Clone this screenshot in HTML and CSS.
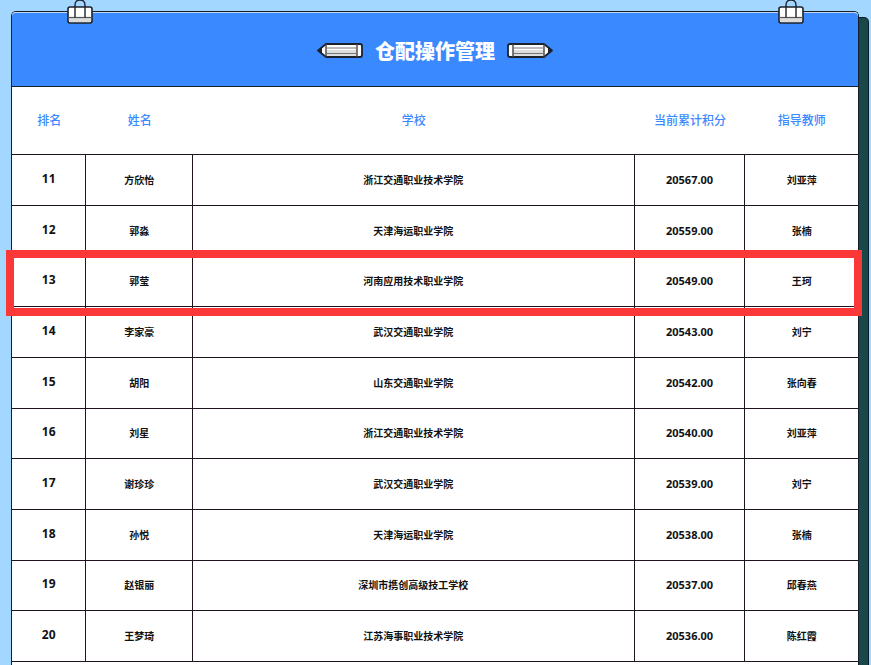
FILE: index.html
```html
<!DOCTYPE html>
<html lang="zh-CN">
<head>
    <meta charset="UTF-8">
    <meta name="viewport" content="width=device-width, initial-scale=1.0">
    <title>仓配操作管理</title>
    <link rel="stylesheet" href="styles.css">
</head>
<body>
    <div class="board">
        <!-- 夹子 -->
        <svg class="clip clip-left" viewBox="0 0 26 24" aria-hidden="true">
            <rect x="1" y="7" width="24" height="16" rx="2" fill="#fff" stroke="#1b222b" stroke-width="1.6"/>
            <path d="M2 18h22v4H2z" fill="#dcdcdc"/>
            <path d="M1 17.500h24" stroke="#555" stroke-width="1.200"/>
            <path d="M8 17.500V5q0-5 5-5t5 5v12.500" fill="none" stroke="#1b222b" stroke-width="1.400"/>
        </svg>
        <svg class="clip clip-right" viewBox="0 0 26 24" aria-hidden="true">
            <rect x="1" y="7" width="24" height="16" rx="2" fill="#fff" stroke="#1b222b" stroke-width="1.6"/>
            <path d="M2 18h22v4H2z" fill="#dcdcdc"/>
            <path d="M1 17.500h24" stroke="#555" stroke-width="1.200"/>
            <path d="M8 17.500V5q0-5 5-5t5 5v12.500" fill="none" stroke="#1b222b" stroke-width="1.400"/>
        </svg>

        <div class="board-header">
            <svg class="pencil" viewBox="0 0 46 15" aria-hidden="true">
                <path d="M1 7.500L9 1h34q2 0 2 2v9q0 2-2 2H9z" fill="#fff" stroke="#1b222b" stroke-width="1.800" stroke-linejoin="round"/>
                <path d="M9 7h31v6H9z" fill="#dedede"/>
                <path d="M9 1v13M40 1v13" stroke="#444" stroke-width="1.400"/>
                <path d="M9 5h31M9 10.500h31" stroke="#777"/>
                <path d="M1 7.500l4-3v6z" fill="#1b222b"/>
            </svg>
            <h1 class="title">仓配操作管理</h1>
            <svg class="pencil" viewBox="0 0 46 15" aria-hidden="true">
                <path d="M45 7.500L37 1H3Q1 1 1 3v9q0 2 2 2h34z" fill="#fff" stroke="#1b222b" stroke-width="1.800" stroke-linejoin="round"/>
                <path d="M6 7h31v6H6z" fill="#dedede"/>
                <path d="M37 1v13M6 1v13" stroke="#444" stroke-width="1.400"/>
                <path d="M6 5h31M6 10.500h31" stroke="#777"/>
                <path d="M45 7.500l-4-3v6z" fill="#1b222b"/>
            </svg>
        </div>

        <table class="rank-table">
            <colgroup>
                <col class="col-rank">
                <col class="col-name">
                <col class="col-school">
                <col class="col-score">
                <col class="col-teacher">
            </colgroup>
            <thead>
                <tr><th>排名</th><th>姓名</th><th>学校</th><th>当前累计积分</th><th>指导教师</th></tr>
            </thead>
            <tbody>
                <tr><td class="rank">11</td><td>方欣怡</td><td>浙江交通职业技术学院</td><td class="score">20567.00</td><td>刘亚萍</td></tr>
                <tr><td class="rank">12</td><td>郭淼</td><td>天津海运职业学院</td><td class="score">20559.00</td><td>张楠</td></tr>
                <tr class="active"><td class="rank">13</td><td>郭莹</td><td>河南应用技术职业学院</td><td class="score">20549.00</td><td>王珂</td></tr>
                <tr><td class="rank">14</td><td>李家豪</td><td>武汉交通职业学院</td><td class="score">20543.00</td><td>刘宁</td></tr>
                <tr><td class="rank">15</td><td>胡阳</td><td>山东交通职业学院</td><td class="score">20542.00</td><td>张向春</td></tr>
                <tr><td class="rank">16</td><td>刘星</td><td>浙江交通职业技术学院</td><td class="score">20540.00</td><td>刘亚萍</td></tr>
                <tr><td class="rank">17</td><td>谢珍珍</td><td>武汉交通职业学院</td><td class="score">20539.00</td><td>刘宁</td></tr>
                <tr><td class="rank">18</td><td>孙悦</td><td>天津海运职业学院</td><td class="score">20538.00</td><td>张楠</td></tr>
                <tr><td class="rank">19</td><td>赵银丽</td><td>深圳市携创高级技工学校</td><td class="score">20537.00</td><td>邱春燕</td></tr>
                <tr><td class="rank">20</td><td>王梦琦</td><td>江苏海事职业技术学院</td><td class="score">20536.00</td><td>陈红霞</td></tr>
            </tbody>
        </table>
    </div>
</body>
</html>
```
FILE: styles.css
```css
* {
    box-sizing: border-box;
}

body {
    margin: 0;
    min-height: 100vh;
    padding: 11px 12px 0 11px;
    display: flex;
    background-color: #a3d7ff;
    font-family: "Noto Sans", "Noto Sans CJK SC", sans-serif;
}

.board {
    position: relative;
    flex: 1;
    background-color: #fff;
    border: 1px solid #14202e;
    border-bottom: none;
    border-radius: 5px 5px 0 0;
    box-shadow: 10px 6px 0 -1px #18484a, 10px 6px 0 0 #0c1c26;
}

/* 顶部夹子 */
.clip {
    position: absolute;
    top: -12px;
    width: 26px;
    height: 24px;
}

.clip-left {
    left: 55px;
}

.clip-right {
    right: 54px;
}

.board-header {
    display: flex;
    align-items: center;
    justify-content: center;
    gap: 12px;
    height: 75px;
    padding-top: 2px;
    background-color: #3a89ff;
    border-top: 1px solid #c3d6ee;
    border-bottom: 1px solid #14202e;
    border-radius: 4px 4px 0 0;
}

.title {
    margin: 0;
    padding-top: 2px;
    color: #fff;
    font-size: 20px;
    font-weight: 900;
    line-height: 28px;
}

.pencil {
    width: 46px;
    height: 15px;
}

.rank-table {
    width: 100%;
    table-layout: fixed;
    border-collapse: separate;
    border-spacing: 0;
    text-align: center;
}

.col-rank {
    width: 8.8%;
}

.col-name {
    width: 12.6%;
}

.col-school {
    width: 52.2%;
}

.col-score {
    width: 13.1%;
}

.col-teacher {
    width: 13.3%;
}

.rank-table th,
.rank-table td {
    padding: 0;
    border-bottom: 1px solid #1f141f;
}

.rank-table th {
    height: 68px;
    padding-bottom: 2px;
    color: #3a89ff;
    font-size: 12px;
    font-weight: 500;
}

.rank-table td {
    height: 51px;
    padding-bottom: 2px;
    border-right: 1px solid #1f141f;
    color: #111;
    font-size: 10px;
    font-weight: 700;
}

.rank-table tr:nth-child(3n) td {
    height: 50px;
}

.rank-table td:last-child {
    border-right: none;
}

.rank-table .rank {
    padding-bottom: 4px;
    font-size: 12px;
}

.rank-table .score {
    font-size: 11px;
}

/* 当前选中的一行 */
.active {
    position: relative;
}

.active::after {
    content: "";
    position: absolute;
    top: -7px;
    right: -4px;
    bottom: -9px;
    left: -6px;
    border: 8px solid #fb3838;
}
```
